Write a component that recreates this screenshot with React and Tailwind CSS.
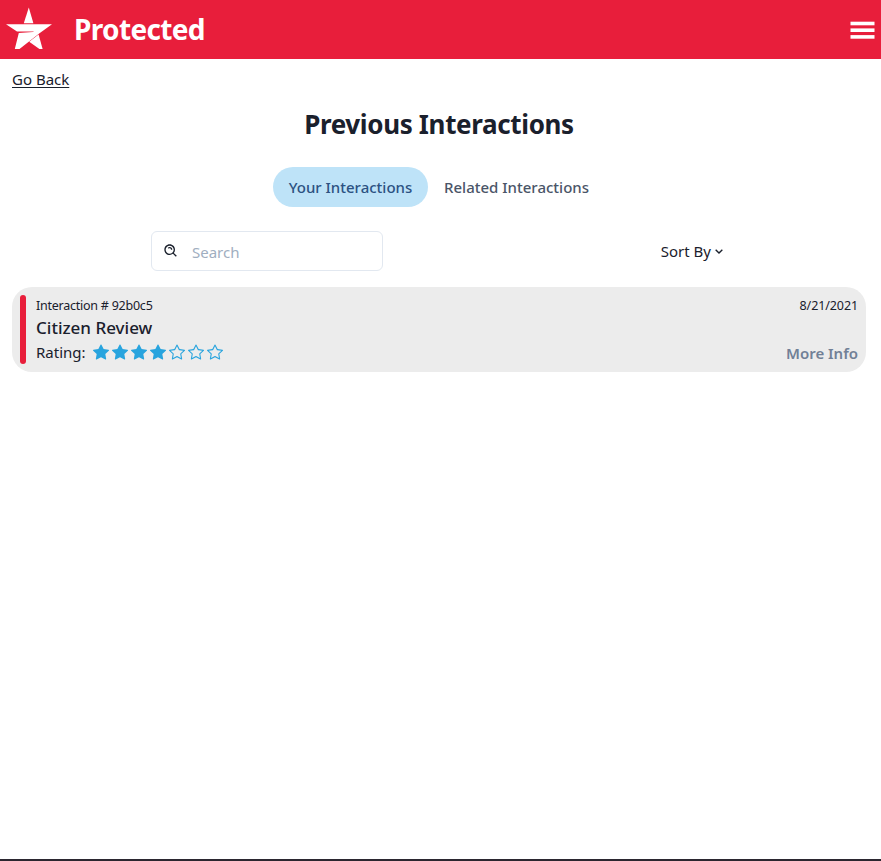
import { BiSearchAlt, BiChevronDown } from "react-icons/bi";
import { BsStar, BsStarFill } from "react-icons/bs";

function Logo() {
  return (
    <svg className="h-[59px] w-[58px] shrink-0" viewBox="0 0 58 59" fill="#fff" aria-hidden="true">
      <path d="M28.8 7.5 33.4 23.2H23.8Z" />
      <path d="M6 24.2H52L39.5 33.2 19.5 49H14.8L18.8 33 33 32 34 31.4 17 31.6Z" />
      <path d="M38.6 34.6 42.6 49H39.4L29.2 41.8Z" />
    </svg>
  );
}

function Header() {
  return (
    <header className="flex h-[59px] items-start bg-[#e81e3b] pr-[6px] text-white">
      <Logo />
      <h1 className="ml-[16px] text-[28px] leading-[58px] font-bold tracking-[-0.65px] whitespace-nowrap">Protected</h1>
      <svg className="mt-[20.5px] ml-auto h-[18px] w-[25px]" viewBox="0 0 25 18" fill="#fff" aria-label="Menu">
        <rect x="0.5" y="0.7" width="24" height="3.6" />
        <rect x="0.5" y="7.4" width="24" height="3.6" />
        <rect x="0.5" y="14.1" width="24" height="3.6" />
      </svg>
    </header>
  );
}

function Rating({ value, max }) {
  return (
    <div className="flex items-center gap-[3px] text-[#28a4de]">
      {Array.from({ length: max }, (_, i) =>
        i < value ? <BsStarFill key={i} size={16} /> : <BsStar key={i} size={16} />
      )}
    </div>
  );
}

function InteractionCard() {
  return (
    <article className="mt-4 flex h-[85px] rounded-[20px] bg-[#ececec] p-2">
      <div className="h-[69px] w-[6px] shrink-0 rounded-[3px] bg-[#e81e3b]" />
      <div className="ml-[10px] flex flex-1 flex-col">
        <div className="flex h-[23px] items-center justify-between text-[12.5px]">
          <span className="tracking-[-0.24px]">Interaction # 92b0c5</span>
          <span className="tracking-[-0.1px]">8/21/2021</span>
        </div>
        <h3 className="h-[22px] text-[17px] leading-[22px] font-medium">Citizen Review</h3>
        <div className="flex h-[25px] items-center justify-between">
          <div className="flex items-center">
            <span className="w-[57px] pt-[2px] text-[15px] leading-[25px]">Rating:</span>
            <Rating value={4} max={7} />
          </div>
          <button className="pt-[4px] text-[15px] leading-[25px] font-semibold text-[#718096]">More Info</button>
        </div>
      </div>
    </article>
  );
}

export default function App() {
  return (
    <div className="flex h-[861px] flex-col overflow-hidden border-b-2 border-[#2b2730] bg-white font-['Noto_Sans',sans-serif] text-[#1a202c]">
      <Header />
      <main className="pr-[15px] pl-3">
        <a className="mt-[8px] block h-[25px] w-fit text-[15px] leading-[24px] underline underline-offset-2">Go Back</a>
        <h2 className="mt-[12px] h-[40px] text-center text-[26px] leading-[40px] font-bold tracking-[-0.35px]">Previous Interactions</h2>
        <div className="mt-[23px] ml-[261px] flex h-10 text-[15px] leading-10 font-medium whitespace-nowrap">
          <button className="w-[155px] rounded-full bg-[#bee3f8] text-[#2c5282]">Your Interactions</button>
          <button className="w-[177px] text-[#4a5568]">Related Interactions</button>
        </div>
        <div className="mt-6 ml-[139px] flex h-10 w-[576px] items-center justify-between">
          <div className="flex h-10 w-[232px] items-center rounded-md border border-[#e2e8f0] pl-[11px]">
            <BiSearchAlt size={16} />
            <span className="mt-[2px] ml-[13px] text-[15px] text-[#a0aec0]">Search</span>
          </div>
          <button className="flex items-center text-[15px]">
            <span>Sort By</span>
            <BiChevronDown size={16} />
          </button>
        </div>
        <InteractionCard />
      </main>
    </div>
  );
}
